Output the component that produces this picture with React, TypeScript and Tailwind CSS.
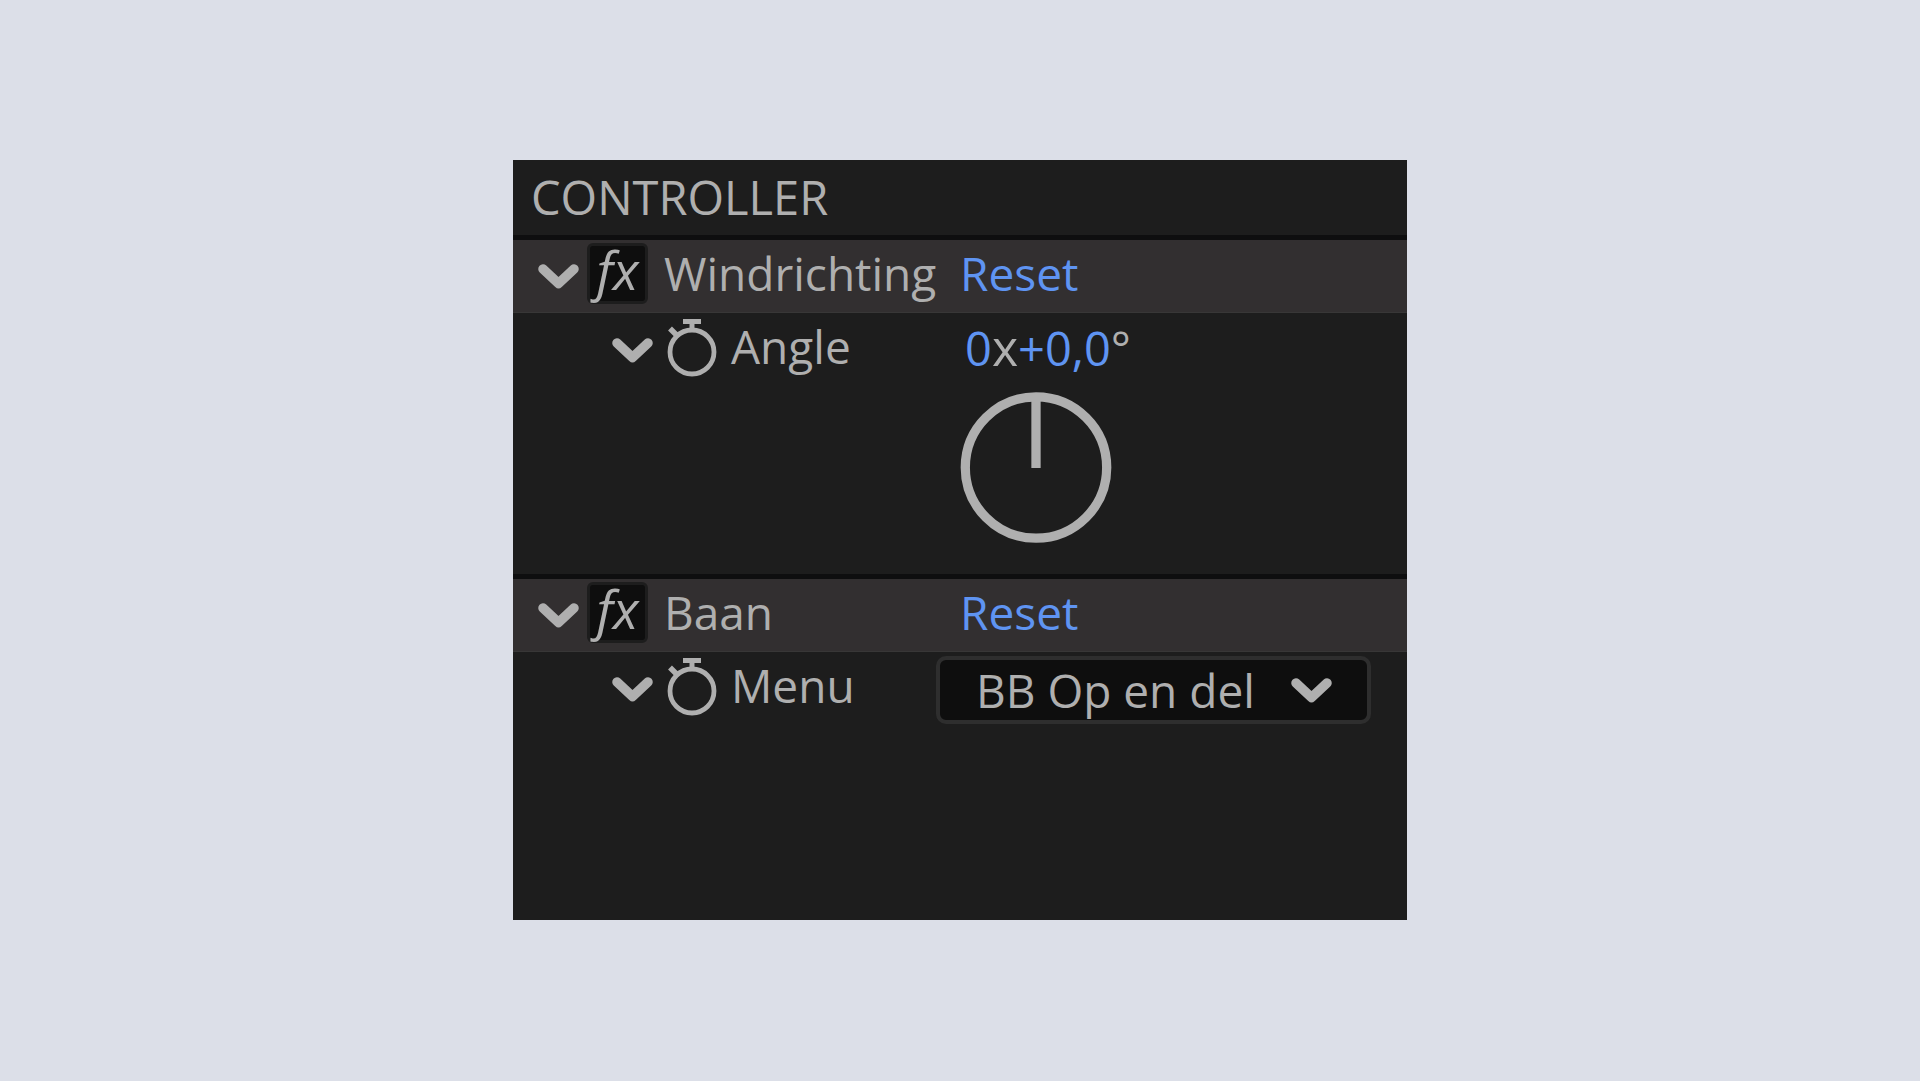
import React, { useState } from 'react';

const Chevron = ({ className = '' }: { className?: string }) => (
  <svg className={`block ${className}`} width="41" height="25" viewBox="0 0 41 25" fill="none" stroke="currentColor">
    <path d="M5 5 L20.5 19.5 L36 5" strokeWidth="9.5" strokeLinecap="round" strokeLinejoin="round" />
  </svg>
);

const Stopwatch = () => (
  <svg className="block" width="50" height="58" viewBox="0 0 50 58" fill="none" stroke="currentColor">
    <circle cx="25" cy="33" r="22" strokeWidth="4.8" />
    <path d="M16 2.5h18" strokeWidth="5" />
    <path d="M25 4v9" strokeWidth="5" />
    <path d="M3 9.5l7.5 7.5" strokeWidth="5.5" />
  </svg>
);

const Dial = () => (
  <svg className="block" width="152" height="152" viewBox="0 0 152 152" fill="none" stroke="currentColor" role="img" aria-label="Angle dial">
    <circle cx="76" cy="75.5" r="70.7" strokeWidth="9.3" />
    <path d="M76 6v70" strokeWidth="9.3" />
  </svg>
);

const EffectHeader = ({ name, onReset }: { name: string; onReset?: () => void }) => (
  <div className="flex h-[73px] items-center border-b border-[#383737] bg-[#322f30] pb-1.5">
    <div className="flex w-[423px] shrink-0 items-center pl-[25px]">
      <button type="button" aria-label={`Collapse ${name}`} className="mt-1.5 shrink-0">
        <Chevron />
      </button>
      <button
        type="button"
        aria-label={`Toggle ${name}`}
        className="ml-2 flex size-[61px] shrink-0 items-center justify-center rounded-md border-3 border-[#1d1d1d] bg-[#0e0e0e] pb-2 text-[53px] leading-none italic"
      >
        fx
      </button>
      <h2 className="ml-4 whitespace-nowrap">{name}</h2>
    </div>
    <button type="button" onClick={onReset} className="ml-6 text-[#5f94f2]">
      Reset
    </button>
  </div>
);

const PropertyLabel = ({ name, htmlFor }: { name: string; htmlFor?: string }) => (
  <div className="flex h-[66px] w-[423px] shrink-0 items-center pl-[99px]">
    <button type="button" aria-label={`Collapse ${name}`} className="mt-2">
      <Chevron />
    </button>
    <button type="button" aria-label={`Animate ${name}`} className="mt-1 ml-3.5">
      <Stopwatch />
    </button>
    <label htmlFor={htmlFor} className="ml-3.5">
      {name}
    </label>
  </div>
);

const App = () => {
  const [menu, setMenu] = useState('BB Op en del');

  return (
    <main className="min-h-screen bg-[#dcdfe8] px-6 py-40">
      <section className="mx-auto min-h-[760px] w-full max-w-[894px] bg-[#1d1d1d] font-['Open_Sans',sans-serif] text-[46px] leading-[66px] text-[#afafaf]">
        <h1 className="pl-[18px] text-[47px] leading-[75px]">CONTROLLER</h1>

        <div className="border-t-5 border-[#0e0e0f]">
          <EffectHeader name="Windrichting" />
          <div className="flex pb-[30px]">
            <PropertyLabel name="Angle" />
            <div className="ml-6">
              <div className="flex h-[68px] items-baseline pt-px pl-[5px] text-[47px]">
                <button type="button" className="text-[#5f94f2]">0</button>
                <span className="text-[50px]">x</span>
                <button type="button" className="text-[#5f94f2]">+0,0</button>
                <span>°</span>
              </div>
              <div className="pt-[11px]">
                <Dial />
              </div>
            </div>
          </div>
        </div>

        <div className="border-t-5 border-[#0e0e0f]">
          <EffectHeader name="Baan" onReset={() => setMenu('BB Op en del')} />
          <div className="flex">
            <PropertyLabel name="Menu" htmlFor="menu" />
            <div className="relative mt-1 mr-9 flex-1">
              <select
                id="menu"
                value={menu}
                onChange={(e) => setMenu(e.target.value)}
                className="h-[68px] w-full appearance-none rounded-[10px] border-4 border-[#2e2e2e] bg-[#0e0e0e] pr-24 pl-9 leading-[60px]"
              >
                <option>BB Op en del</option>
              </select>
              <Chevron className="pointer-events-none absolute top-[22px] right-[39px]" />
            </div>
          </div>
        </div>
      </section>
    </main>
  );
};

export default App;
